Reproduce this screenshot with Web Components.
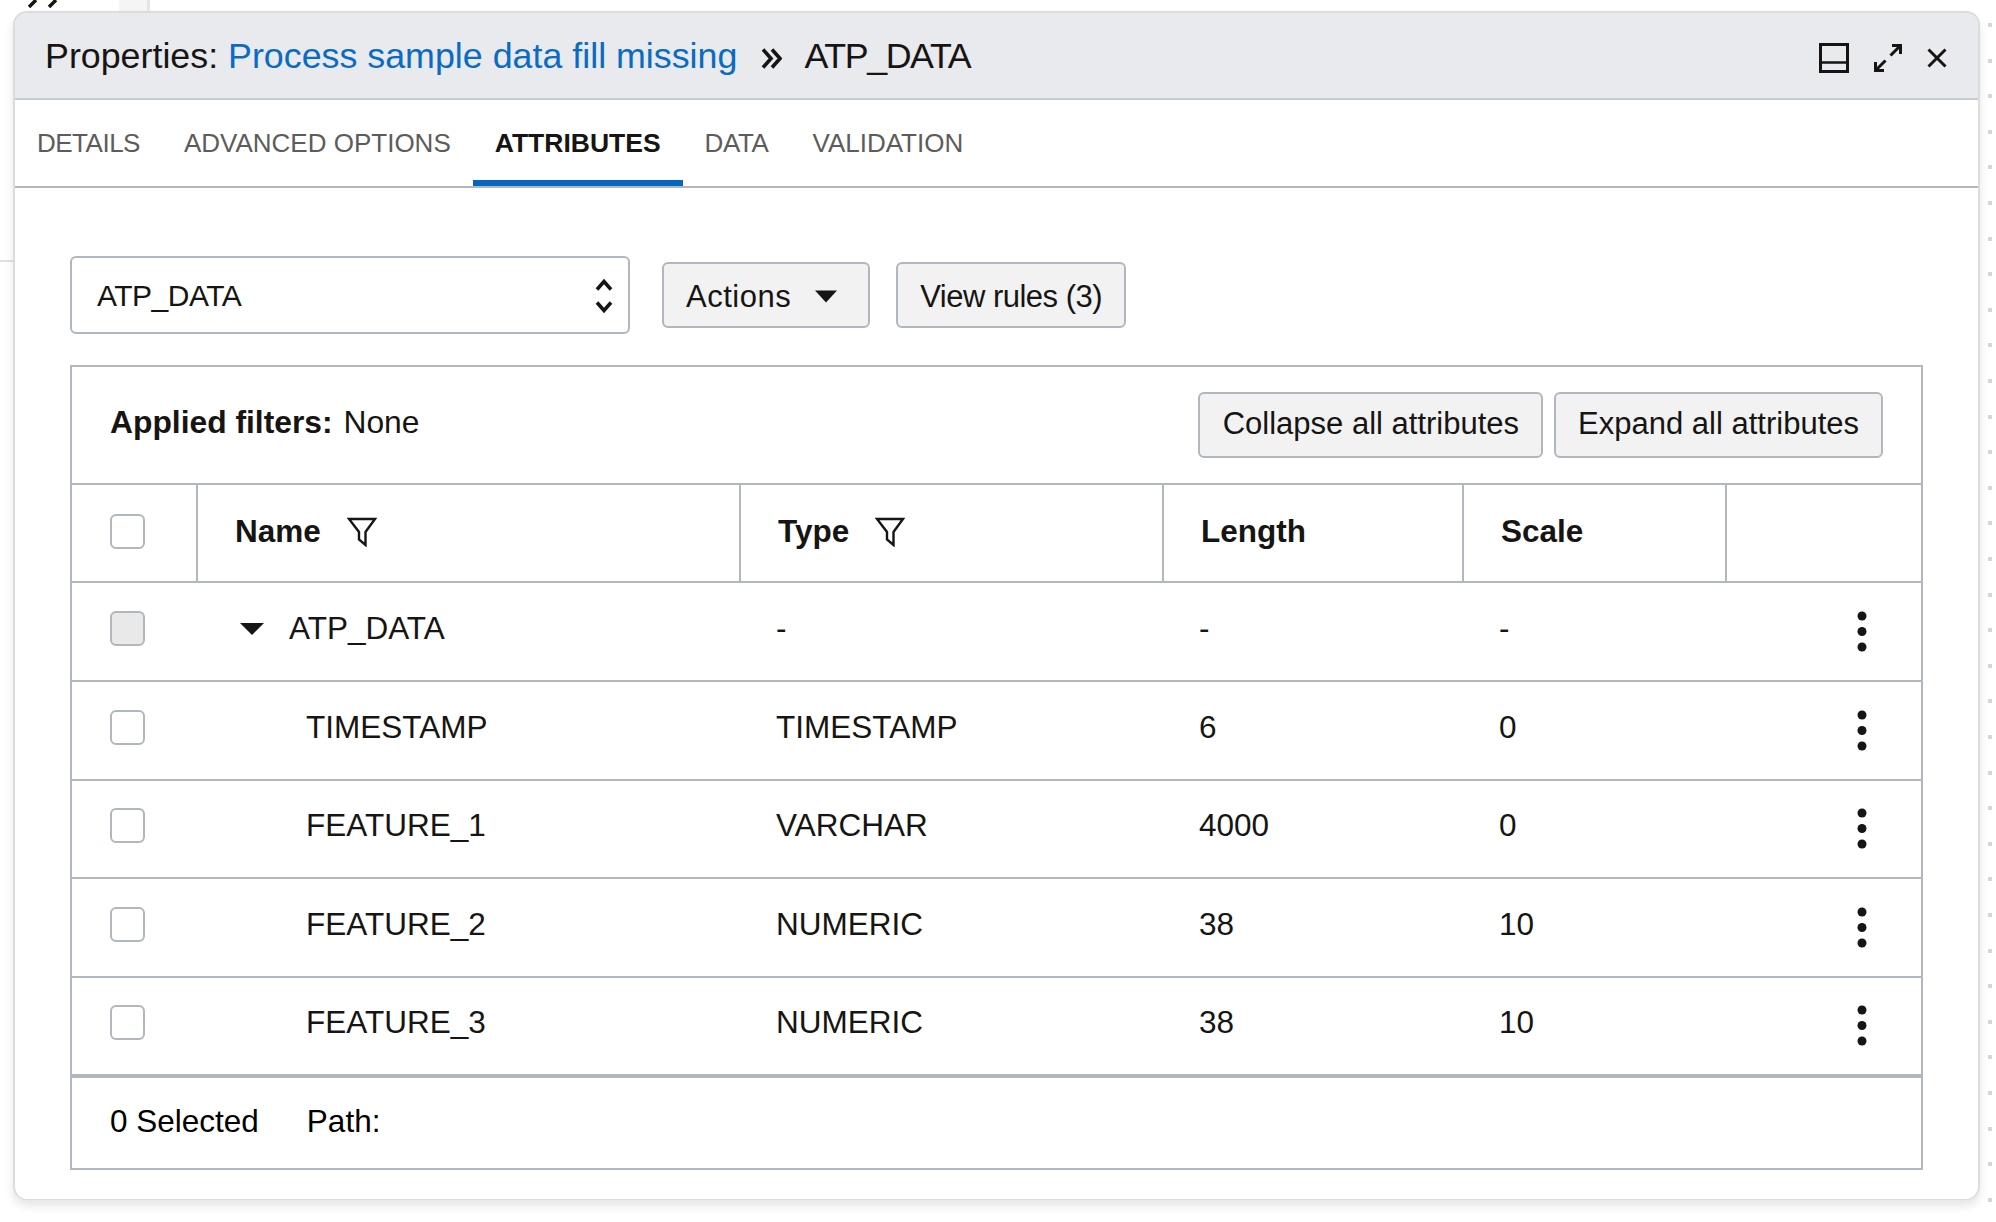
<!DOCTYPE html>
<html lang="en">
<head>
<meta charset="utf-8">
<title>Properties</title>
<style>
    html, body { margin: 0; height: 100%; background: #fff; }
    body { font-family: "Liberation Sans", Arial, sans-serif; color: #161513; overflow: hidden; }
</style>
</head>
<body>
<props-page>
    <props-panel>
        <span slot="label">Properties:</span>
        <a slot="link">Process sample data fill missing</a>
        <span slot="current">ATP_DATA</span>
        <panel-tabs>
            <panel-tab style="letter-spacing: -0.5px">DETAILS</panel-tab>
            <panel-tab>ADVANCED OPTIONS</panel-tab>
            <panel-tab active>ATTRIBUTES</panel-tab>
            <panel-tab style="letter-spacing: -0.4px">DATA</panel-tab>
            <panel-tab>VALIDATION</panel-tab>
        </panel-tabs>
        <attr-toolbar>
            <entity-select>ATP_DATA</entity-select>
            <ui-button caret style="letter-spacing: 0.5px; padding-top: 3px">Actions</ui-button>
            <ui-button style="letter-spacing: -0.5px; padding-top: 3px">View rules (3)</ui-button>
        </attr-toolbar>
        <attr-table>
            <filter-bar>
                <ui-button slot="actions" style="padding-bottom: 2px; padding-left: 23px">Collapse all attributes</ui-button>
                <ui-button slot="actions" style="padding-bottom: 2px">Expand all attributes</ui-button>
            </filter-bar>
            <attr-head></attr-head>
            <attr-row parent name="ATP_DATA" type="-" length="-" scale="-"></attr-row>
            <attr-row name="TIMESTAMP" type="TIMESTAMP" length="6" scale="0"></attr-row>
            <attr-row name="FEATURE_1" type="VARCHAR" length="4000" scale="0"></attr-row>
            <attr-row name="FEATURE_2" type="NUMERIC" length="38" scale="10"></attr-row>
            <attr-row name="FEATURE_3" type="NUMERIC" length="38" scale="10"></attr-row>
            <attr-foot></attr-foot>
        </attr-table>
    </props-panel>
</props-page>

<script>
const COLS = '126px 543px 423px 300px 263px 1fr';

class PropsPage extends HTMLElement {
    constructor() {
        super();
        this.attachShadow({ mode: 'open' });
        this.shadowRoot.innerHTML = `
            <style>
                :host { display: block; position: relative; width: 1996px; height: 1222px; padding: 11px 16px 0 13px; box-sizing: border-box; }
                /* bits of the page behind the panel */
                .chev { position: absolute; left: 26px; top: 0; }
                .col { position: absolute; left: 119px; top: 0; width: 28px; height: 12px; background: #f5f5f5; border-right: 3px solid #e4e4e4; }
                .rule { position: absolute; left: 0; top: 260px; width: 14px; height: 2px; background: #e2e2e2; }
                .dots { position: absolute; left: 1988px; top: 23px; bottom: 0; width: 4px;
                    background: repeating-linear-gradient(to bottom, #d6d6d6 0 4px, transparent 4px 35.6px); }
                ::slotted(*) { position: relative; }
            </style>
            <svg class="chev" width="34" height="8" viewBox="0 0 34 8" fill="none" stroke="#161513" stroke-width="3.5"><path d="M10 0 L3 7M30 0 L23 7"/></svg>
            <div class="col"></div>
            <div class="rule"></div>
            <div class="dots"></div>
            <slot></slot>
        `;
    }
}

class PropsPanel extends HTMLElement {
    constructor() {
        super();
        this.attachShadow({ mode: 'open' });
        this.shadowRoot.innerHTML = `
            <style>
                :host { display: block; height: 1189px; box-sizing: border-box; background: #fff; border: 2px solid #dcdcdc; border-bottom-width: 1px; border-radius: 14px; box-shadow: 0 6px 10px rgba(0, 0, 0, 0.1); overflow: hidden; }
                header { display: flex; align-items: center; height: 87px; box-sizing: border-box; padding: 1px 31px 0 30px; background: #e9eaed; border-bottom: 2px solid #c5cbd0; font-size: 35.8px; }
                .title { flex: 1; white-space: nowrap; }
                ::slotted(a) { color: #0a6bc4; }
                ::slotted([slot="current"]) { letter-spacing: -1.4px; }
                .sep { display: inline-block; margin: 0 22px 0 24px; vertical-align: -1px; }
                .icons { display: flex; align-items: center; gap: 24px; margin-top: 3px; }
                svg { display: block; }
            </style>
            <header>
                <div class="title"><slot name="label"></slot> <slot name="link"></slot><svg class="sep" width="21" height="21" viewBox="0 0 21 21" fill="none" stroke="#161513" stroke-width="3.6"><path d="M2 1.5L10 10.5L2 19.5M11 1.5L19 10.5L11 19.5"/></svg><slot name="current"></slot></div>
                <div class="icons">
                    <svg width="30" height="30" viewBox="0 0 30 30" fill="none" stroke="#161513" stroke-width="3"><rect x="1.5" y="1.5" width="27" height="27"/><path d="M1.5 19.5H28.5" stroke-width="2.5"/></svg>
                    <svg width="30" height="30" viewBox="0 0 30 30" fill="none" stroke="#161513" stroke-width="3"><path d="M19 2.5H27.5V11M27 3L17.5 12.5M11 27.5H2.5V19M3 27L12.5 17.5"/></svg>
                    <svg width="20" height="20" viewBox="0 0 20 20" fill="none" stroke="#161513" stroke-width="3"><path d="M1.5 1.5L18.5 18.5M18.5 1.5L1.5 18.5"/></svg>
                </div>
            </header>
            <slot></slot>
        `;
    }
}

class PanelTabs extends HTMLElement {
    constructor() {
        super();
        this.attachShadow({ mode: 'open' });
        this.shadowRoot.innerHTML = `
            <style>
                :host { display: flex; height: 88px; box-sizing: border-box; border-bottom: 2px solid #b0b7be; }
            </style>
            <slot></slot>
        `;
    }
}

class PanelTab extends HTMLElement {
    constructor() {
        super();
        this.attachShadow({ mode: 'open' });
        this.shadowRoot.innerHTML = `
            <style>
                :host { display: flex; align-items: center; height: 86px; padding: 0 22px; box-sizing: border-box; font-size: 26px; color: #5d5c5a; white-space: nowrap; }
                :host([active]) { color: #161513; font-size: 26.5px; font-weight: bold; border-bottom: 6px solid #0566c1; padding-top: 6px; }
            </style>
            <slot></slot>
        `;
    }
}

class AttrToolbar extends HTMLElement {
    constructor() {
        super();
        this.attachShadow({ mode: 'open' });
        this.shadowRoot.innerHTML = `
            <style>
                :host { display: flex; align-items: center; gap: 26px; padding: 68px 55px 31px; }
            </style>
            <slot></slot>
        `;
    }
}

class EntitySelect extends HTMLElement {
    constructor() {
        super();
        this.attachShadow({ mode: 'open' });
        this.shadowRoot.innerHTML = `
            <style>
                :host { display: flex; align-items: center; justify-content: space-between; width: 560px; height: 78px; margin-right: 6px; box-sizing: border-box; padding: 1px 14px 0 25px; border: 2px solid #b0b7be; border-radius: 6px; background: #fff; font-size: 30px; letter-spacing: -0.5px; }
            </style>
            <span><slot></slot></span>
            <svg width="20" height="36" viewBox="0 0 20 36" fill="none" stroke="#161513" stroke-width="3.5"><path d="M3 11.5L10 3.5L17 11.5M3 24.5L10 32.5L17 24.5"/></svg>
        `;
    }
}

class UiButton extends HTMLElement {
    constructor() {
        super();
        this.attachShadow({ mode: 'open' });
        const caret = this.hasAttribute('caret')
            ? '<svg width="22" height="13" viewBox="0 0 22 13" fill="#161513"><path d="M0 0.5H22L11 12.5Z"/></svg>' : '';
        this.shadowRoot.innerHTML = `
            <style>
                :host { display: inline-flex; align-items: center; gap: 24px; height: 66px; box-sizing: border-box; padding: 0 22px; border: 2px solid #b0b7be; border-radius: 6px; background: #f2f2f2; font-size: 31px; white-space: nowrap; }
                :host([caret]) { padding-right: 31px; }
            </style>
            <span><slot></slot></span>${caret}
        `;
    }
}

class AttrTable extends HTMLElement {
    constructor() {
        super();
        this.attachShadow({ mode: 'open' });
        this.shadowRoot.innerHTML = `
            <style>
                :host { display: block; margin: 0 55px 0 55px; border: 2px solid #b0b7be; font-size: 31.5px; }
            </style>
            <slot></slot>
        `;
    }
}

class FilterBar extends HTMLElement {
    constructor() {
        super();
        this.attachShadow({ mode: 'open' });
        this.shadowRoot.innerHTML = `
            <style>
                :host { display: flex; align-items: center; justify-content: space-between; height: 116px; box-sizing: border-box; padding: 0 38px; font-size: 31.8px; }
                b { font-weight: bold; margin-right: 2px; }
                .label { padding-bottom: 5px; }
                .btns { display: flex; gap: 11px; }
            </style>
            <div class="label"><b>Applied filters:</b> None</div>
            <div class="btns"><slot name="actions"></slot></div>
        `;
    }
}

class CheckBox extends HTMLElement {
    constructor() {
        super();
        this.attachShadow({ mode: 'open' });
        this.shadowRoot.innerHTML = `
            <style>
                :host { display: block; width: 35px; height: 35px; box-sizing: border-box; border: 2px solid #b0b7be; border-radius: 6px; background: #fff; }
                :host([disabled]) { background: #e9e9e9; }
            </style>
        `;
    }
}

class FilterIcon extends HTMLElement {
    constructor() {
        super();
        this.attachShadow({ mode: 'open' });
        this.shadowRoot.innerHTML = `
            <style>:host { display: block; width: 30px; height: 30px; margin-left: 26px; }</style>
            <svg width="30" height="30" viewBox="0 0 30 30" fill="none" stroke="#161513" stroke-width="2.4" stroke-linejoin="miter"><path d="M2 2H28L18.5 15V28L12 22.5V15Z"/></svg>
        `;
    }
}

class AttrHead extends HTMLElement {
    constructor() {
        super();
        this.attachShadow({ mode: 'open' });
        this.shadowRoot.innerHTML = `
            <style>
                :host { display: grid; grid-template-columns: ${COLS}; height: 100px; box-sizing: border-box; border-top: 2px solid #b0b7be; border-bottom: 2px solid #b0b7be; font-weight: bold; }
                div { display: flex; align-items: center; border-right: 2px solid #b0b7be; padding: 0 0 3px 37px; }
                .check { padding-left: 38px; }
                .end { border-right: 0; }
            </style>
            <div class="check"><check-box></check-box></div>
            <div>Name<filter-icon></filter-icon></div>
            <div>Type<filter-icon></filter-icon></div>
            <div>Length</div>
            <div>Scale</div>
            <div class="end"></div>
        `;
    }
}

class AttrRow extends HTMLElement {
    constructor() {
        super();
        this.attachShadow({ mode: 'open' });
    }

    connectedCallback() {
        const parent = this.hasAttribute('parent');
        const name = this.getAttribute('name');
        this.shadowRoot.innerHTML = `
            <style>
                :host { display: grid; grid-template-columns: ${COLS}; height: 98.5px; box-sizing: border-box; border-bottom: 2px solid #b0b7be; }
                :host([parent]) { height: 99px; }
                :host(:last-of-type) { height: 100.5px; border-bottom-width: 4px; }
                div { display: flex; align-items: center; padding: 0 0 6px 35px; }
                .check { padding-left: 38px; }
                .name { padding-left: ${parent ? '42px' : '108px'}; }
                .arrow { margin-right: 25px; }
                .kebab { justify-content: flex-end; padding: 0 54px 0 0; }
                svg { display: block; }
            </style>
            <div class="check"><check-box ${parent ? 'disabled' : ''}></check-box></div>
            <div class="name">
                ${parent ? '<svg class="arrow" width="24" height="14" viewBox="0 0 24 14" fill="#161513"><path d="M0 1H24L12 13Z"/></svg>' : ''}${name}
            </div>
            <div>${this.getAttribute('type')}</div>
            <div>${this.getAttribute('length')}</div>
            <div>${this.getAttribute('scale')}</div>
            <div class="kebab">
                <svg width="10" height="41" viewBox="0 0 10 41" fill="#161513"><circle cx="5" cy="5" r="4.5"/><circle cx="5" cy="20.5" r="4.5"/><circle cx="5" cy="36" r="4.5"/></svg>
            </div>
        `;
    }
}

class AttrFoot extends HTMLElement {
    constructor() {
        super();
        this.attachShadow({ mode: 'open' });
        this.shadowRoot.innerHTML = `
            <style>
                :host { display: flex; align-items: center; gap: 48px; height: 90px; box-sizing: border-box; padding: 0 38px 4px; color: #000; }
            </style>
            <span>0 Selected</span>
            <span>Path:</span>
        `;
    }
}

customElements.define('props-page', PropsPage);
customElements.define('props-panel', PropsPanel);
customElements.define('panel-tabs', PanelTabs);
customElements.define('panel-tab', PanelTab);
customElements.define('attr-toolbar', AttrToolbar);
customElements.define('entity-select', EntitySelect);
customElements.define('ui-button', UiButton);
customElements.define('attr-table', AttrTable);
customElements.define('filter-bar', FilterBar);
customElements.define('check-box', CheckBox);
customElements.define('filter-icon', FilterIcon);
customElements.define('attr-head', AttrHead);
customElements.define('attr-row', AttrRow);
customElements.define('attr-foot', AttrFoot);
</script>
</body>
</html>
